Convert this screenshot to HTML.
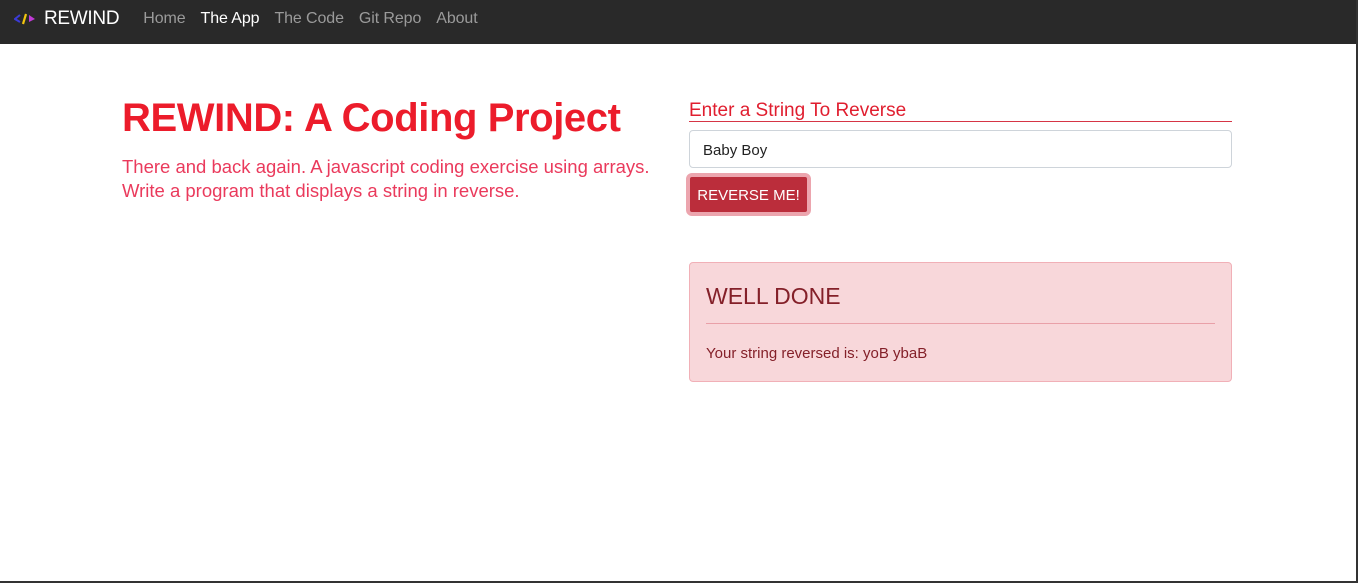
<!DOCTYPE html>
<html><head><meta charset="utf-8"><style>
*{box-sizing:border-box;margin:0;padding:0}
body{width:1358px;height:583px;overflow:hidden;background:#fff;font-family:"Liberation Sans",sans-serif;position:relative;border-right:2px solid #333;border-bottom:2px solid #333}
.nav{height:44px;background:#292929;display:flex;align-items:center;padding-left:14px;padding-bottom:6px}
.brand{color:#fff;font-size:19px;display:flex;align-items:center;margin-right:24px;letter-spacing:-0.3px}
.brand svg{margin-right:6px}
.nav a{color:#9a9a9a;font-size:16px;margin-right:15px;text-decoration:none;letter-spacing:-0.1px}
.nav a.act{color:#fff}
h1{position:absolute;left:122px;top:96px;font-size:40px;color:#ec1c2b;font-weight:bold;letter-spacing:-0.4px}
.sub{position:absolute;left:122px;top:155px;font-size:18.5px;line-height:24px;color:#ea3a5c;font-weight:300;width:560px}
.lab{position:absolute;left:689px;top:100px;width:543px;font-size:19px;color:#e01e2f;border-bottom:1px solid #d63545;padding-bottom:0;line-height:21px}
.inp{position:absolute;left:689px;top:130px;width:543px;height:38px;border:1px solid #ced4da;border-radius:4px;font-size:15px;padding:11px 13px;color:#222}
.btn{position:absolute;left:686px;top:173px;width:125px;height:43px;border:4px solid #eca5ae;border-radius:6px;background:#bb2d3b;color:#fff;font-size:15px;text-align:center;line-height:37px}
.alert{position:absolute;left:689px;top:262px;width:543px;height:120px;background:#f8d7da;border:1px solid #f1b0b7;border-radius:4px;color:#842029}
.alert h4{font-size:23px;font-weight:normal;margin:20px 16px 0;padding-bottom:13px;border-bottom:1px solid #e9a0a8}
.alert p{margin:21px 16px 0;font-size:15px}
</style></head><body>
<div class="nav">
<div class="brand"><svg width="24" height="14" viewBox="0 0 24 14"><path d="M6 3 L1 7 L6 10" stroke="#3b3bd6" stroke-width="2" fill="none"/><path d="M12 2 L9 12" stroke="#f1c40f" stroke-width="2.2"/><path d="M15 3 L21 7 L15 10 Z" fill="#c13ad6"/></svg>REWIND</div>
<a>Home</a><a class="act">The App</a><a>The Code</a><a>Git Repo</a><a>About</a>
</div>
<h1>REWIND: A Coding Project</h1>
<div class="sub">There and back again. A javascript coding exercise using arrays. Write a program that displays a string in reverse.</div>
<div class="lab">Enter a String To Reverse</div>
<div class="inp">Baby Boy</div>
<div class="btn">REVERSE ME!</div>
<div class="alert"><h4>WELL DONE</h4><p>Your string reversed is: yoB ybaB</p></div>
</body></html>
